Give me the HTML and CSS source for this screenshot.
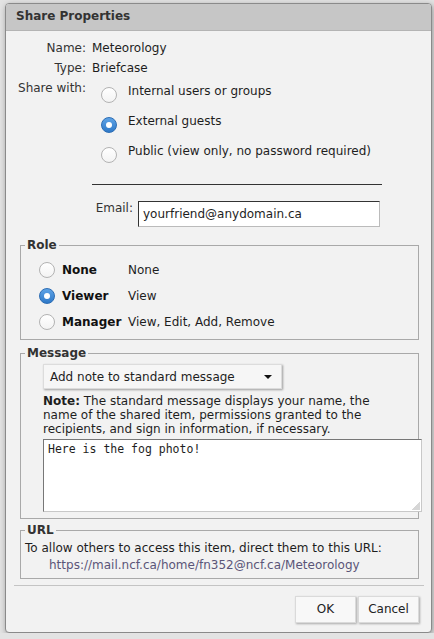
FILE: index.html
```html
<!DOCTYPE html>
<html>
 <head>
  <meta charset="utf-8">
  <title>Share Properties</title>
  <link rel="stylesheet" href="styles.css">
 </head>
 <body>
  <div class="dialog">
   <div class="dlgTitle">Share Properties</div>

   <div class="dlgBody">
    <div class="props">
     <div class="propLabel">Name:</div>
     <div class="propValue">Meteorology</div>
     <div class="propLabel">Type:</div>
     <div class="propValue">Briefcase</div>
     <div class="propLabel">Share with:</div>
     <div class="shareOpts">
      <div class="shareOpt"><span class="radio"></span><span>Internal users or groups</span></div>
      <div class="shareOpt"><span class="radio checked"></span><span>External guests</span></div>
      <div class="shareOpt"><span class="radio"></span><span>Public (view only, no password required)</span></div>
     </div>
    </div>

    <div class="rule"></div>

    <div class="emailRow">
     <span class="emailLabel">Email:</span>
     <div class="textField">yourfriend@anydomain.ca</div>
    </div>

    <fieldset class="group">
     <legend>Role</legend>
     <div class="roleRow"><span class="radio"></span><b class="roleName">None</b><span>None</span></div>
     <div class="roleRow"><span class="radio checked"></span><b class="roleName">Viewer</b><span>View</span></div>
     <div class="roleRow"><span class="radio"></span><b class="roleName">Manager</b><span>View, Edit, Add, Remove</span></div>
    </fieldset>

    <fieldset class="group msgGroup">
     <legend>Message</legend>
     <div class="select">
      <span>Add note to standard message</span>
      <span class="selArrow"></span>
     </div>
     <p class="note"><b>Note:</b> The standard message displays your name, the name of the shared item, permissions granted to the recipients, and sign in information, if necessary.</p>
     <div class="textArea">Here is the fog photo!<span class="grip"></span></div>
    </fieldset>

    <fieldset class="group urlGroup">
     <legend>URL</legend>
     <div>To allow others to access this item, direct them to this URL:</div>
     <div class="url">https://mail.ncf.ca/home/fn352@ncf.ca/Meteorology</div>
    </fieldset>
   </div>

   <div class="dlgFooter">
    <div class="btn">OK</div>
    <div class="btn">Cancel</div>
   </div>
  </div>
 </body>
</html>
```

FILE: styles.css
```css
* { box-sizing: border-box; }

body {
 margin: 0;
 background: #e3e3e3;
 font-family: "DejaVu Sans", Verdana, sans-serif;
 font-size: 12px;
 color: #1e1e1e;
}

/* window */
.dialog {
 margin: 3px 0 0 5px;
 width: 427px;
 height: 630px;
 background: #f2f2f2;
 border: 1px solid #8a8a8a;
 border-radius: 4px;
 box-shadow: 1px 2px 6px rgba(0,0,0,.35);
 overflow: hidden;
}
.dlgTitle {
 height: 27px;
 line-height: 25px;
 padding-left: 10px;
 background: #c6c6c6;
 border-bottom: 1px solid #b4b4b4;
 font-weight: bold;
 color: #333;
}
.dlgBody { padding: 7px 12px 0 14px; }

/* name / type / share with */
.props {
 display: grid;
 grid-template-columns: 74px 1fr;
 column-gap: 6px;
 margin-left: -8px;
 line-height: 20px;
}
.propLabel { text-align: right; color: #333; }
.shareOpt {
 display: flex;
 align-items: flex-start;
 height: 30px;
 padding-top: 3px;
}
.shareOpt .radio { margin: 6px 11px 0 9px; }

.rule {
 width: 290px;
 margin: 16px 0 0 72px;
 border-top: 1px solid #333;
}

.emailRow {
 display: flex;
 margin-top: 16px;
}
.emailLabel {
 width: 113px;
 text-align: right;
 line-height: 14px;
 color: #333;
 margin-right: 5px;
}
.textField {
 width: 242px;
 height: 26px;
 padding: 0 4px;
 line-height: 24px;
 background: #fff;
 border: 1px solid #bbb;
 border-top-color: #333;
 border-left-color: #333;
}

/* radios */
.radio {
 flex: none;
 width: 16px;
 height: 16px;
 border-radius: 50%;
 border: 1px solid #b3b3b3;
 background: linear-gradient(#fff, #f3f3f3);
 position: relative;
}
.radio.checked {
 border-color: #2c6db4;
 background: linear-gradient(#5ea3e6, #2f79c8);
}
.radio.checked::after {
 content: "";
 position: absolute;
 left: 4px; top: 4px;
 width: 6px; height: 6px;
 border-radius: 50%;
 background: #fff;
}

/* grouped boxes */
.group {
 min-width: 0;
 margin: 11px 0 0 0;
 padding: 5px 12px 4px 4px;
 border: 1px solid #a9a9a9;
}
.group legend {
 padding: 0 2px;
 line-height: 14px;
 font-weight: bold;
 color: #333;
}
.roleRow {
 display: flex;
 align-items: center;
 height: 26px;
}
.roleRow .radio { margin: 0 7px 0 14px; }
.roleName { width: 66px; color: #111; }

.msgGroup { margin-top: 6px; padding-top: 4px; padding-bottom: 6px; }
.select {
 display: flex;
 justify-content: space-between;
 align-items: center;
 width: 239px;
 height: 25px;
 margin-left: 18px;
 padding: 0 9px 0 6px;
 background: #f6f6f6;
 border: 1px solid #dcdcdc;
 box-shadow: 1px 1px 2px rgba(0,0,0,.35);
}
.selArrow {
 border-left: 4px solid transparent;
 border-right: 4px solid transparent;
 border-top: 4px solid #111;
}
.note {
 margin: 5px 0 0 18px;
 line-height: 14px;
}
.textArea {
 position: relative;
 width: 379px;
 height: 73px;
 margin: 3px 0 0 18px;
 padding: 1px 4px;
 background: #fff;
 border: 1px solid #c8c8c8;
 border-top-color: #777;
 border-left-color: #777;
 font-family: "DejaVu Sans Mono", monospace;
 font-size: 11.5px;
 line-height: 16px;
}
.grip {
 position: absolute;
 right: 1px; bottom: 1px;
 width: 8px; height: 8px;
 background: linear-gradient(135deg, transparent 50%, #d6d6d6 50%);
}

.urlGroup { margin-top: 4px; padding-top: 3px; line-height: 17px; }
.url { padding-left: 24px; color: #5a5578; }

/* buttons */
.dlgFooter {
 display: flex;
 justify-content: flex-end;
 gap: 2px;
 margin: 6px 7px 0 8px;
 padding: 10px 5px 0 0;
 border-top: 1px solid #c4c4c4;
}
.btn {
 width: 61px;
 height: 27px;
 line-height: 25px;
 text-align: center;
 background: #f8f8f8;
 border: 1px solid #dadada;
 box-shadow: 1px 1px 2px rgba(0,0,0,.3);
 color: #222;
}
```
